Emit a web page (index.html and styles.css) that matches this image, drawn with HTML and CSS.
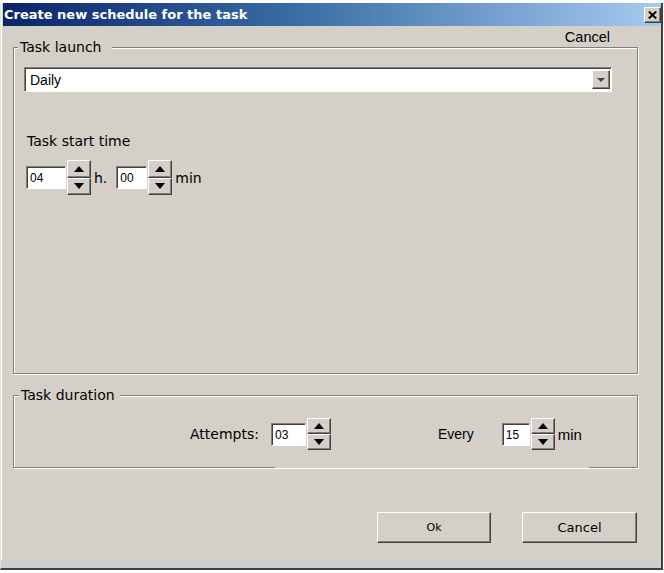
FILE: index.html
```html
<!DOCTYPE html>
<html lang="en">
<head>
  <meta charset="UTF-8">
  <title>Create new schedule for the task</title>
  <link rel="stylesheet" href="styles.css">
</head>
<body>
  <div class="window">
    <div class="titlebar">
      <span class="title">Create new schedule for the task</span>
      <span class="close">
        <svg width="9" height="8" viewBox="0 0 9 8"><path d="M0.8 0.6 L8.2 7.4 M8.2 0.6 L0.8 7.4" stroke="#000" stroke-width="2"/></svg>
      </span>
    </div>

    <div class="toplink">Cancel</div>

    <fieldset class="group launch">
      <legend>Task launch</legend>
      <div class="select">
        <span class="select-text">Daily</span>
        <span class="drop"><span class="tri-small"></span></span>
      </div>
      <div class="label">Task start time</div>
      <div class="spinrow">
        <span class="num num-hour">04</span>
        <span class="spin"><span class="up"></span><span class="down"></span></span>
        <span class="unit unit-h">h.</span>
        <span class="num num-min">00</span>
        <span class="spin"><span class="up"></span><span class="down"></span></span>
        <span class="unit unit-min">min</span>
      </div>
    </fieldset>

    <div class="duration-wrap">
      <fieldset class="group duration">
        <legend>Task duration</legend>
        <div class="durrow">
          <span class="attempts">Attempts:</span>
          <span class="num num-attempts">03</span>
          <span class="spin spin-small"><span class="up"></span><span class="down"></span></span>
          <span class="every">Every</span>
          <span class="num num-every">15</span>
          <span class="spin spin-small"><span class="up"></span><span class="down"></span></span>
          <span class="every-min">min</span>
        </div>
      </fieldset>
    </div>

    <div class="actions">
      <button class="btn btn-ok">Ok</button>
      <button class="btn btn-cancel">Cancel</button>
    </div>

    <div class="filler"></div>
    <div class="status"></div>
  </div>
</body>
</html>
```

FILE: styles.css
```css
body {
  margin: 0;
  padding-top: 3px;
  background: #fff;
  font-family: "DejaVu Sans", sans-serif;
  color: #000;
}
.window {
  width: 663px;
  height: 567px;
  box-sizing: border-box;
  background: #d4d0c8;
  border-left: 1px solid #e4e2dc;
  border-right: 2px solid #404040;
  border-bottom: 2px solid #404040;
  box-shadow: inset 1px 0 0 #fff;
  display: flex;
  flex-direction: column;
}
.titlebar {
  height: 23px;
  margin-left: 2px;
  padding-left: 1px;
  display: flex;
  align-items: center;
  justify-content: space-between;
  background: linear-gradient(to right, #0a246a, #3a6ea5 45%, #a6caf0);
}
.title {
  color: #fff;
  font-weight: bold;
  font-size: 13px;
}
.close {
  width: 17px;
  height: 16px;
  box-sizing: border-box;
  display: flex;
  align-items: center;
  justify-content: center;
  background: #d4d0c8;
  border: 1px solid;
  border-color: #fff #404040 #404040 #fff;
  box-shadow: inset -1px -1px 0 #808080;
}
.toplink {
  align-self: flex-end;
  margin: 4px 51px -5px 0;
  font: 14.5px/14px "Liberation Sans", sans-serif;
  position: relative;
}

/* etched group boxes */
.group {
  margin: 0 0 0 12px;
  padding: 0;
  width: 625px;
  box-sizing: border-box;
  border: 1px solid #808080;
  box-shadow: 1px 1px 0 #fff, inset 1px 1px 0 #fff;
  min-inline-size: 0;
}
.group legend {
  padding: 0 11px 0 2px;
  margin-left: 4px;
  font-size: 14px;
  line-height: 16px;
  background: #d4d0c8;
}
.launch {
  height: 335px;
}
.duration-wrap {
  position: relative;
  margin-top: 13px;
}
.duration-wrap::after {
  content: "";
  position: absolute;
  left: 274px;
  bottom: 0;
  width: 314px;
  height: 1px;
  background: #d4d0c8;
}
.duration {
  height: 81px;
}
.duration legend {
  margin-left: 5px;
  padding-right: 5px;
}

/* dropdown */
.select {
  margin: 12px 0 0 10px;
  width: 588px;
  height: 25px;
  box-sizing: border-box;
  background: #fff;
  border: 1px solid;
  border-color: #808080 #fff #fff #808080;
  box-shadow: inset 1px 1px 0 #404040;
  display: flex;
  align-items: center;
  justify-content: space-between;
}
.select-text {
  padding-left: 5px;
  font: 14px "Liberation Sans", sans-serif;
}
.drop {
  width: 18px;
  height: 19px;
  margin-right: 1px;
  box-sizing: border-box;
  background: #d4d0c8;
  border: 1px solid;
  border-color: #fff #404040 #404040 #fff;
  box-shadow: inset -1px -1px 0 #808080;
  display: flex;
  align-items: center;
  justify-content: center;
}
.tri-small {
  width: 0;
  height: 0;
  border-left: 4px solid transparent;
  border-right: 4px solid transparent;
  border-top: 4px solid #444;
}

.label {
  margin: 41px 0 0 13px;
  font-size: 14px;
  line-height: 16px;
}

/* numeric fields with spinners */
.spinrow,
.durrow {
  display: flex;
  align-items: center;
}
.spinrow {
  margin: 11px 0 0 12px;
  height: 35px;
}
.durrow {
  margin-top: 15px;
  height: 32px;
}
.num {
  height: 23px;
  box-sizing: border-box;
  background: #fff;
  border: 1px solid;
  border-color: #808080 #fff #fff #808080;
  box-shadow: inset 1px 1px 0 #404040;
  padding: 4px 0 0 3px;
  font: 12px/15px "Liberation Sans", sans-serif;
}
.num-hour { width: 40px; }
.num-min { width: 31px; margin-left: 9px; }
.num-attempts { width: 35px; margin-left: 12px; }
.num-every { width: 28px; margin-left: 28px; }
.spin {
  width: 24px;
  height: 35px;
  margin-left: 1px;
  display: flex;
  flex-direction: column;
}
.spin-small {
  height: 32px;
}
.spin span {
  flex: 1;
  box-sizing: border-box;
  background: #d4d0c8;
  border: 1px solid;
  border-color: #fff #404040 #404040 #fff;
  box-shadow: inset -1px -1px 0 #808080;
  display: flex;
  align-items: center;
  justify-content: center;
}
.spin .up::before,
.spin .down::before {
  content: "";
  width: 0;
  height: 0;
  border-left: 5px solid transparent;
  border-right: 5px solid transparent;
}
.spin .up::before {
  border-bottom: 6px solid #000;
}
.spin .down::before {
  border-top: 6px solid #000;
}
.unit {
  font-size: 14px;
  margin-left: 3px;
}
.attempts {
  margin-left: 176px;
  font-size: 14px;
}
.every {
  margin-left: 107px;
  font: 14px "Liberation Sans", sans-serif;
}
.every-min {
  margin-left: 3px;
  font: 15px "Liberation Sans", sans-serif;
}

/* dialog buttons */
.actions {
  display: flex;
  justify-content: flex-end;
  gap: 31px;
  margin-top: 44px;
  padding-right: 24px;
}
.btn {
  width: 114px;
  height: 31px;
  background: #d4d0c8;
  border: 1px solid;
  border-color: #fff #404040 #404040 #fff;
  box-shadow: inset -1px -1px 0 #808080;
  font-family: "DejaVu Sans", sans-serif;
  color: #000;
  padding: 0;
}
.btn-ok {
  font-size: 11px;
}
.btn-cancel {
  width: 115px;
  font-size: 13px;
}
.filler {
  flex: 1;
}
.status {
  height: 8px;
  background: #cfcfcd;
}
```
